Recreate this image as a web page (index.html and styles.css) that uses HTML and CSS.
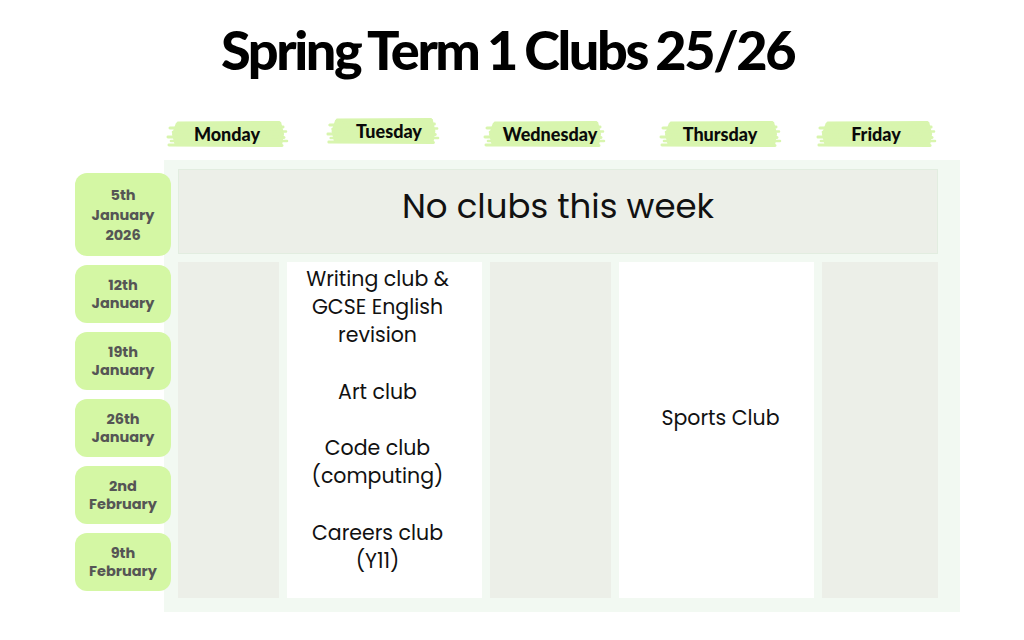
FILE: index.html
```html
<!DOCTYPE html>
<html>
<head>
<meta charset="utf-8">
<link rel="stylesheet" href="styles.css">
</head>
<body>
<div class="page">
  <h1 class="title">Spring Term 1 Clubs 25/26</h1>
  <div class="days">
    <div class="day d-mon"><svg class="brush" viewBox="0 0 124 28" preserveAspectRatio="none"><use href="#brush"/></svg><span>Monday</span></div>
    <div class="day d-tue"><svg class="brush" viewBox="0 0 124 28" preserveAspectRatio="none"><use href="#brush"/></svg><span>Tuesday</span></div>
    <div class="day d-wed"><svg class="brush" viewBox="0 0 124 28" preserveAspectRatio="none"><use href="#brush"/></svg><span>Wednesday</span></div>
    <div class="day d-thu"><svg class="brush" viewBox="0 0 124 28" preserveAspectRatio="none"><use href="#brush"/></svg><span>Thursday</span></div>
    <div class="day d-fri"><svg class="brush" viewBox="0 0 124 28" preserveAspectRatio="none"><use href="#brush"/></svg><span>Friday</span></div>
  </div>
  <div class="main">
    <div class="dates">
      <div class="date tall">5th<br>January<br>2026</div>
      <div class="date">12th<br>January</div>
      <div class="date">19th<br>January</div>
      <div class="date">26th<br>January</div>
      <div class="date">2nd<br>February</div>
      <div class="date">9th<br>February</div>
    </div>
    <div class="table">
      <div class="week-off">No clubs this week</div>
      <div class="cols">
        <div class="cell grey"></div>
        <div class="cell white tue">Writing club &amp;<br>GCSE English<br>revision<br><br>Art club<br><br>Code club<br>(computing)<br><br>Careers club<br>(Y11)</div>
        <div class="cell grey"></div>
        <div class="cell white thu">Sports Club</div>
        <div class="cell grey"></div>
      </div>
    </div>
  </div>
</div>
<svg width="0" height="0" class="defs">
  <defs>
    <g id="brush" fill="#d8f5ae" stroke="#d8f5ae" stroke-linecap="round">
      <path d="M10 3 L116 2 L119 14 L117 25 L9 26 L6 14 Z" stroke="none"/>
      <path d="M12 3 L114 2.5" stroke-width="3"/>
      <path d="M4 8 L118 7" stroke-width="3"/>
      <path d="M7 12 L121 11.5" stroke-width="2.5"/>
      <path d="M2 17 L119 17.5" stroke-width="3"/>
      <path d="M5 21 L122 21" stroke-width="2.5"/>
      <path d="M3 25 L117 25.5" stroke-width="3"/>
    </g>
  </defs>
</svg>
</body>
</html>
```
FILE: styles.css
```css
* { box-sizing: border-box; }
html, body { margin: 0; padding: 0; background: #ffffff; }
body { font-family: "Poppins", "Open Sans", "Noto Sans", sans-serif; color: #111; }
.defs { position: absolute; }

.page { width: 1024px; height: 640px; overflow: hidden; }

.title {
  margin: 0;
  padding-top: 18px;
  padding-right: 9px;
  height: 110px;
  text-align: center;
  font-family: "Lato", sans-serif;
  font-weight: 900;
  font-size: 54px;
  line-height: 64px;
  letter-spacing: -2.4px;
  word-spacing: -2px;
  color: #000;
}

.days {
  display: grid;
  grid-template-columns: 126px 186px 136px 216px 96px;
  margin-left: 164px;
  height: 50px;
  padding-top: 10px;
}
.day {
  position: relative;
  justify-self: center;
  width: 123px;
  height: 28px;
  display: flex;
  align-items: center;
  justify-content: center;
  font-family: "Lato", sans-serif;
  font-weight: 900;
  font-size: 18px;
  color: #0a0a0a;
}
.day span { position: relative; }
.brush { position: absolute; inset: 0; width: 100%; height: 100%; }
.d-tue { width: 114px; margin-top: -3px; }
.d-tue span, .d-wed span { left: 6px; }
.d-fri { width: 121px; }

.main { display: flex; align-items: flex-start; }
.dates {
  margin-left: 75px;
  margin-right: -7px;
  width: 96px;
  padding-top: 13px;
  display: flex;
  flex-direction: column;
  gap: 9px;
  position: relative;
  z-index: 1;
}
.date {
  height: 58px;
  border-radius: 12px;
  background: #d4f7a4;
  color: #555;
  font-weight: 700;
  font-size: 14.5px;
  line-height: 18px;
  display: flex;
  align-items: center;
  justify-content: center;
  text-align: center;
}
.date.tall { height: 83px; line-height: 20px; }

.table {
  width: 796px;
  height: 452px;
  background: #f2f9f2;
  padding: 9px 22px 14px 14px;
  display: flex;
  flex-direction: column;
  gap: 8px;
}
.week-off {
  height: 85px;
  background: #ecefe8;
  border: 1px solid #e2ede0;
  display: flex;
  align-items: center;
  justify-content: center;
  font-size: 34px;
  color: #111;
  padding-bottom: 10px;
}
.cols {
  flex: 1;
  display: grid;
  grid-template-columns: 101px 195px 121px 195px 116px;
  column-gap: 8px;
}
.cell.grey { background: #ecefe8; }
.cell.white { background: #ffffff; }
.cell { text-align: center; font-size: 20.5px; color: #111; }
.tue { line-height: 28.2px; padding-top: 3px; padding-right: 14px; }
.thu { display: flex; align-items: center; justify-content: center; padding-bottom: 26px; padding-left: 8px; }
```
